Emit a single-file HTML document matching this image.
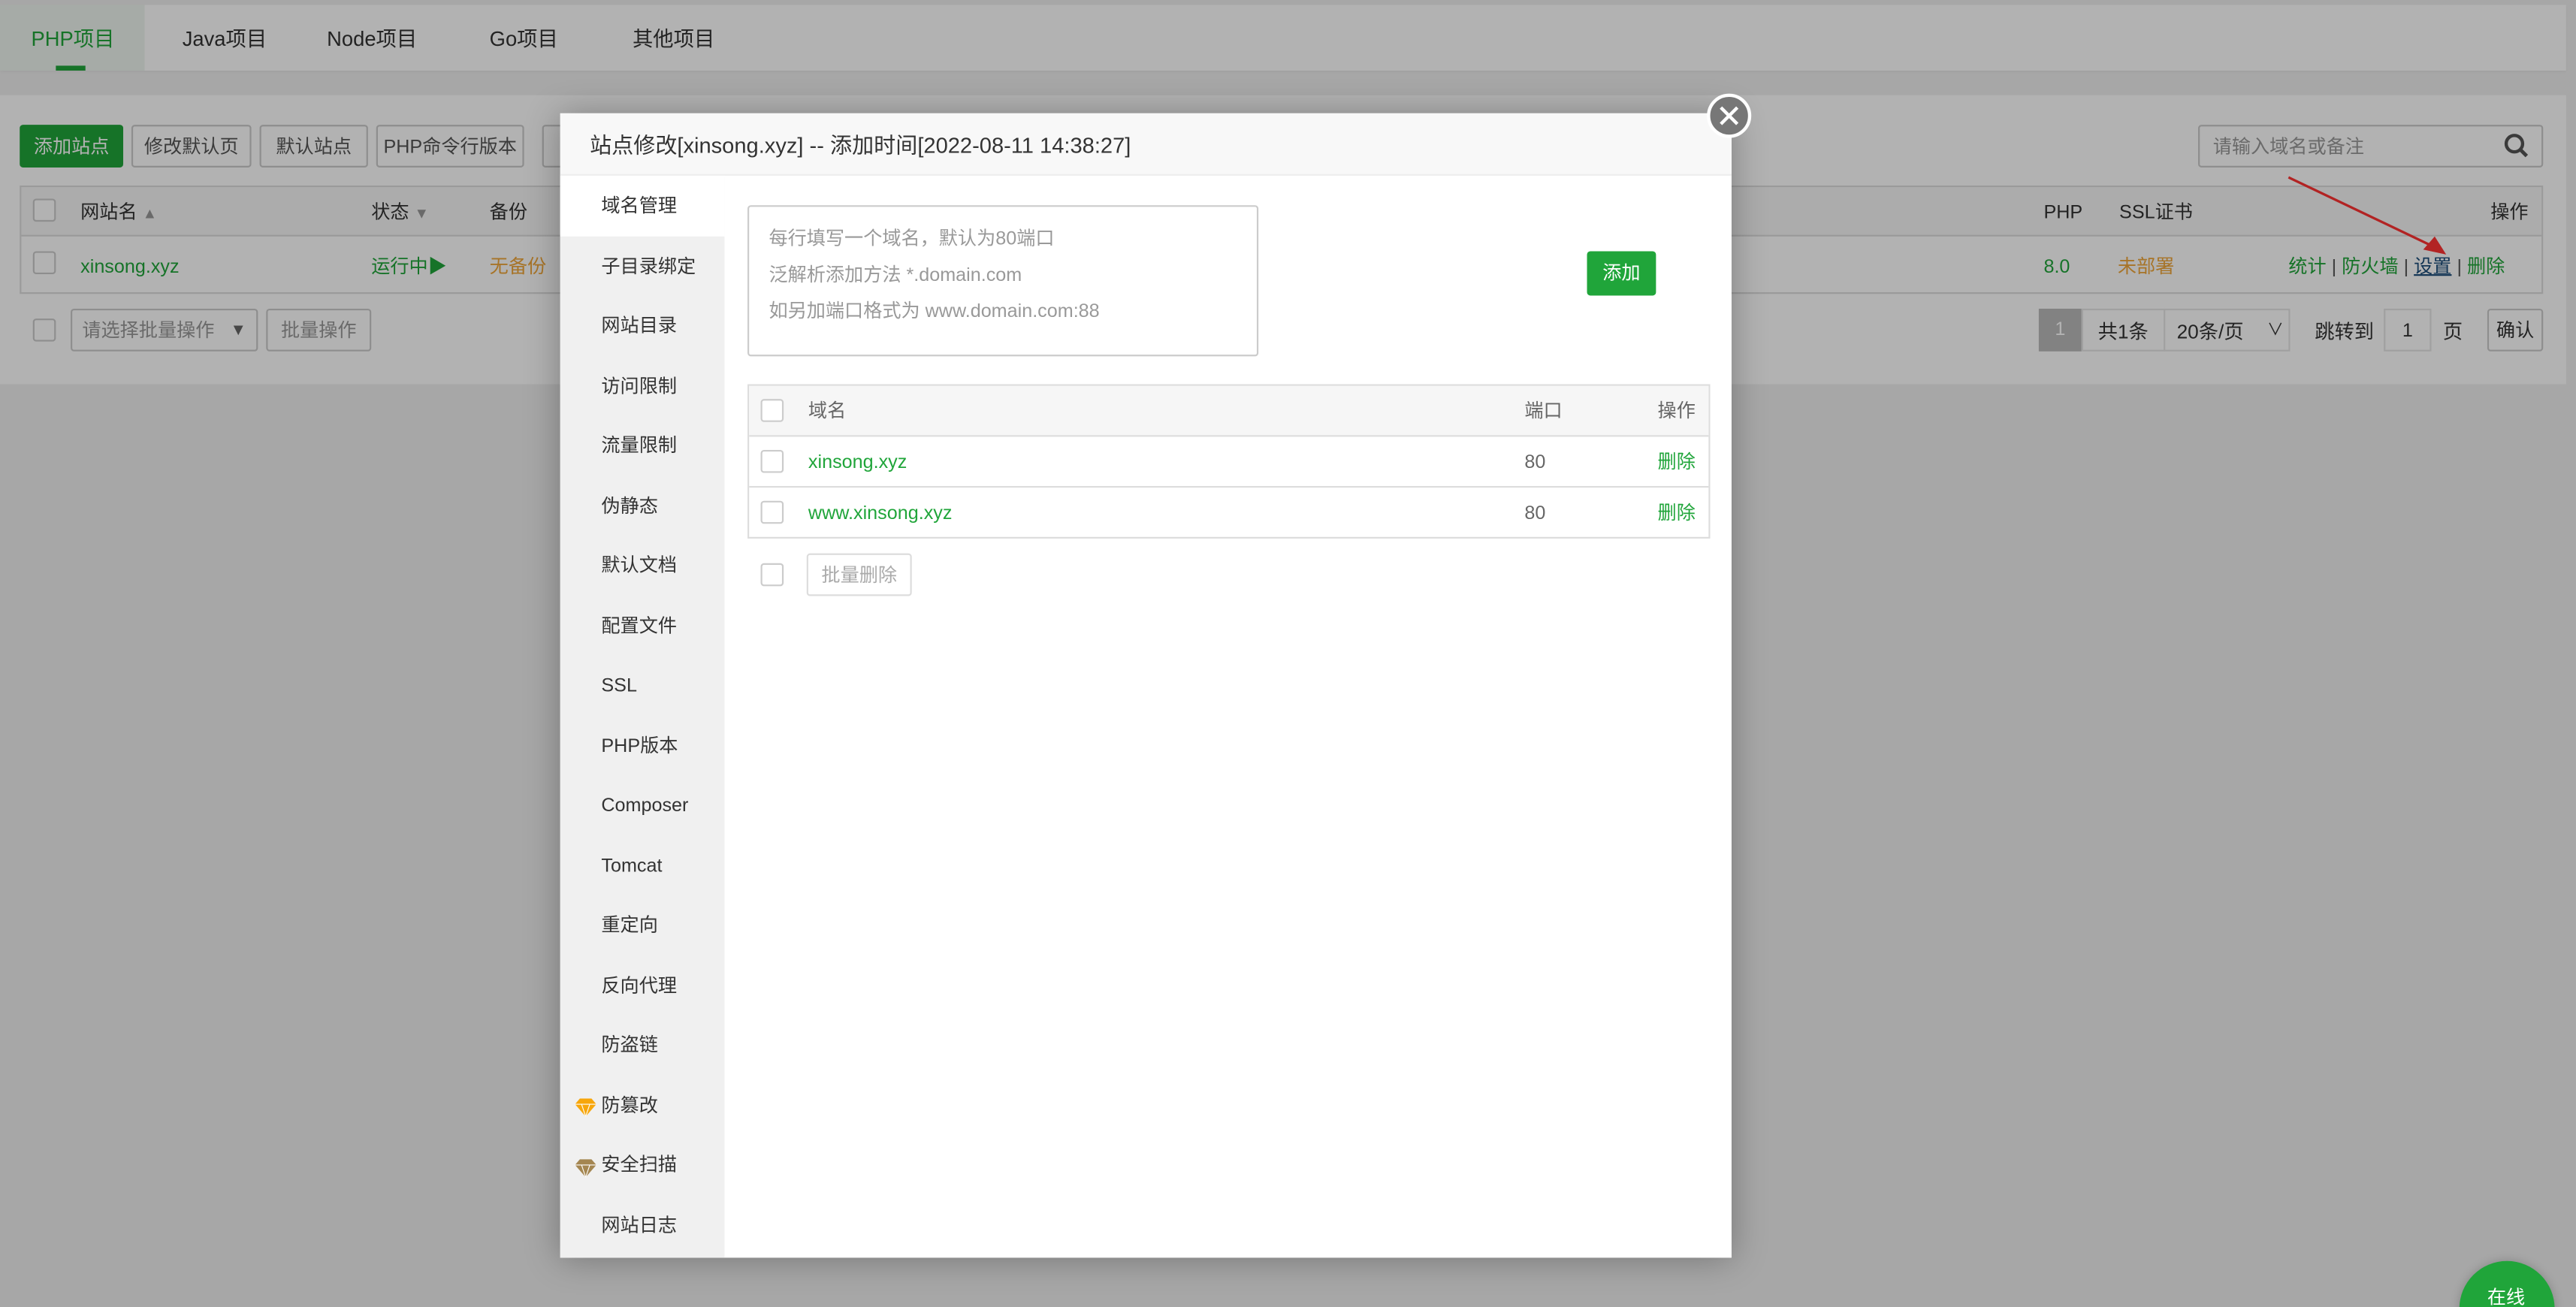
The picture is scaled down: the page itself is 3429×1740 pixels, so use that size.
<!DOCTYPE html>
<html><head><meta charset="utf-8"><style>
*{box-sizing:border-box;margin:0;padding:0}
html,body{width:3429px;height:1740px;overflow:hidden;background:#a8a8a8}
#w{position:absolute;left:0;top:0;width:1568px;height:796px;overflow:hidden;transform:scale(2.18686,2.18593);transform-origin:0 0;font-family:"Liberation Sans","Noto Sans CJK SC",sans-serif;color:#333;font-size:11.5px;background:#f0f0f0}
.a{position:absolute;white-space:nowrap;line-height:20px}
.btn{position:absolute;border:1px solid #ccc;border-radius:2px;background:#fff;color:#555;text-align:center;font-size:11.5px}
.cb{position:absolute;width:14px;height:14px;border:1px solid #ccc;border-radius:2px;background:#fff}
.g{color:#20a53a}.o{color:#f0a63a}
#ov{position:absolute;left:0;top:0;width:1568px;height:796px;background:rgba(0,0,0,.3)}
.si{position:absolute;left:0;width:100px;height:36.5px;line-height:38px;padding-left:25px;font-size:11.5px;color:#333}
</style></head><body><div id="w">
<div class="a" style="left:0;top:3px;width:1562px;height:40px;background:#fff;box-shadow:0 1px 2px rgba(0,0,0,.05)"></div>
<div class="a" style="left:0;top:3px;width:88px;height:40px;background:#eef5ef"></div>
<div class="a" style="left:34px;top:40px;width:18px;height:3px;background:#20a53a"></div>
<div class="a g" style="left:19px;top:14px;font-size:12.5px">PHP项目</div>
<div class="a" style="left:111px;top:14px;font-size:12.5px">Java项目</div>
<div class="a" style="left:199px;top:14px;font-size:12.5px">Node项目</div>
<div class="a" style="left:298px;top:14px;font-size:12.5px">Go项目</div>
<div class="a" style="left:385px;top:14px;font-size:12.5px">其他项目</div>
<div class="a" style="left:0;top:58px;width:1562px;height:176px;background:#fff"></div>
<div class="btn" style="left:12px;top:76px;width:63px;height:26px;line-height:26px;background:#20a53a;border-color:#20a53a;color:#fff">添加站点</div>
<div class="btn" style="left:80px;top:76px;width:73px;height:26px;line-height:26px">修改默认页</div>
<div class="btn" style="left:158px;top:76px;width:66px;height:26px;line-height:26px">默认站点</div>
<div class="btn" style="left:229px;top:76px;width:90px;height:26px;line-height:26px">PHP命令行版本</div>
<div class="btn" style="left:330px;top:76px;width:40px;height:26px"></div>
<div class="btn" style="left:1338px;top:76px;width:210px;height:26px;line-height:26px;text-align:left;padding-left:8px;color:#999">请输入域名或备注</div>
<svg class="a" style="left:1524px;top:81px" width="16" height="16" viewBox="0 0 16 16"><circle cx="6.5" cy="6.5" r="5" fill="none" stroke="#555" stroke-width="2"/><path d="M10 10l4 4" stroke="#555" stroke-width="2.2"/></svg>
<div class="a" style="left:12px;top:113px;width:1536px;height:66px;border:1px solid #ddd"></div>
<div class="a" style="left:13px;top:114px;width:1534px;height:30px;background:#f6f6f6;border-bottom:1px solid #ddd"></div>
<div class="cb" style="left:20px;top:121px"></div>
<div class="a" style="left:49px;top:120px">网站名 <span style="color:#999;font-size:9px">▲</span></div>
<div class="a" style="left:226px;top:120px">状态 <span style="color:#999;font-size:9px">▼</span></div>
<div class="a" style="left:298px;top:120px">备份</div>
<div class="a" style="left:1244px;top:120px">PHP</div>
<div class="a" style="left:1290px;top:120px">SSL证书</div>
<div class="a" style="left:1516px;top:120px">操作</div>
<div class="cb" style="left:20px;top:153px"></div>
<div class="a g" style="left:49px;top:153px">xinsong.xyz</div>
<div class="a g" style="left:226px;top:153px">运行中▶</div>
<div class="a o" style="left:298px;top:153px">无备份</div>
<div class="a g" style="left:1244px;top:153px">8.0</div>
<div class="a o" style="left:1289px;top:153px">未部署</div>
<div class="a g" style="left:1393px;top:153px">统计 <span style="color:#555">|</span> 防火墙 <span style="color:#555">|</span> <span style="color:#1c4d7a;text-decoration:underline">设置</span> <span style="color:#555">|</span> 删除</div>
<div class="cb" style="left:20px;top:194px"></div>
<div class="btn" style="left:43px;top:188px;width:114px;height:26px;line-height:26px;text-align:left;padding-left:6px;color:#999">请选择批量操作<span style="position:absolute;right:6px;color:#666;font-size:10px">▼</span></div>
<div class="btn" style="left:162px;top:188px;width:64px;height:26px;line-height:26px;color:#999">批量操作</div>
<div class="a" style="left:1241px;top:188px;width:26px;height:26px;background:#bbb;color:#fff;text-align:center;line-height:26px">1</div>
<div class="a" style="left:1267px;top:188px;width:127px;height:26px;border:1px solid #e6e6e6"></div>
<div class="a" style="left:1317px;top:188px;width:1px;height:26px;background:#e6e6e6"></div>
<div class="a" style="left:1277px;top:192px;font-size:12px">共1条</div>
<div class="a" style="left:1325px;top:192px;font-size:12px">20条/页</div>
<div class="a" style="left:1380px;top:192px;font-size:10px">∨</div>
<div class="a" style="left:1409px;top:192px;font-size:12px">跳转到</div>
<div class="a" style="left:1451px;top:188px;width:29px;height:26px;border:1px solid #e6e6e6;text-align:center;line-height:26px">1</div>
<div class="a" style="left:1487px;top:192px;font-size:12px">页</div>
<div class="btn" style="left:1514px;top:188px;width:34px;height:26px;line-height:26px;color:#333">确认</div>
<svg class="a" style="left:1385px;top:100px" width="110" height="62"><path d="M8 8L100 52" stroke="#f33" stroke-width="1.5"/><path d="M104 55L90 52L97 44Z" fill="#f33"/></svg>
<div id="ov"></div>
<div class="a" style="left:341px;top:69px;width:713px;height:697px;background:#fff;box-shadow:0 1px 20px rgba(0,0,0,.3)"></div>
<div class="a" style="left:341px;top:69px;width:713px;height:38px;background:#f8f8f8;border-bottom:1px solid #eee"></div>
<div class="a" style="left:359px;top:79px;font-size:13.3px;color:#333">站点修改[xinsong.xyz] -- 添加时间[2022-08-11 14:38:27]</div>
<div class="a" style="left:1039px;top:57px;width:27px;height:27px;border-radius:50%;background:#777;border:2px solid #fff"></div>
<svg class="a" style="left:1039px;top:57px" width="27" height="27"><path d="M8.5 8.5L18.5 18.5M18.5 8.5L8.5 18.5" stroke="#fff" stroke-width="2"/></svg>
<div class="a" style="left:341px;top:107px;width:100px;height:659px;background:#f0f0f0">
<div class="si" style="top:0;background:#fff">域名管理</div>
<div class="si" style="top:36.5px">子目录绑定</div>
<div class="si" style="top:73px">网站目录</div>
<div class="si" style="top:109.5px">访问限制</div>
<div class="si" style="top:146px">流量限制</div>
<div class="si" style="top:182.5px">伪静态</div>
<div class="si" style="top:219px">默认文档</div>
<div class="si" style="top:255.5px">配置文件</div>
<div class="si" style="top:292px">SSL</div>
<div class="si" style="top:328.5px">PHP版本</div>
<div class="si" style="top:365px">Composer</div>
<div class="si" style="top:401.5px">Tomcat</div>
<div class="si" style="top:438px">重定向</div>
<div class="si" style="top:474.5px">反向代理</div>
<div class="si" style="top:511px">防盗链</div>
<div class="si" style="top:547.5px">防篡改</div>
<div class="si" style="top:584px">安全扫描</div>
<div class="si" style="top:620.5px">网站日志</div>
<svg class="a" style="left:9px;top:562px" width="13" height="11" viewBox="0 0 13 11"><path d="M3 0H10L13 3.5L6.5 11L0 3.5Z" fill="#f7a60b"/><path d="M0 3.5H13M4 3.5L6.5 11L9 3.5" stroke="#fff" stroke-width=".5" fill="none"/></svg>
<svg class="a" style="left:9px;top:599px" width="13" height="11" viewBox="0 0 13 11"><path d="M3 0H10L13 3.5L6.5 11L0 3.5Z" fill="#a48651"/><path d="M0 3.5H13M4 3.5L6.5 11L9 3.5" stroke="#fff" stroke-width=".5" fill="none"/></svg>
</div>
<div class="a" style="left:455px;top:125px;width:311px;height:92px;border:1px solid #ccc;border-radius:2px"></div>
<div class="a" style="left:468px;top:135px;color:#999;line-height:22px">每行填写一个域名，默认为80端口<br>泛解析添加方法 *.domain.com<br>如另加端口格式为 www.domain.com:88</div>
<div class="btn" style="left:966px;top:153px;width:42px;height:27px;line-height:27px;background:#20a53a;border-color:#20a53a;color:#fff">添加</div>
<div class="a" style="left:455px;top:234px;width:586px;height:94px;border:1px solid #ddd"></div>
<div class="a" style="left:456px;top:235px;width:584px;height:31px;background:#f6f6f6;border-bottom:1px solid #ddd"></div>
<div class="a" style="left:456px;top:296px;width:584px;height:1px;background:#ddd"></div>
<div class="cb" style="left:463px;top:243px"></div>
<div class="a" style="left:492px;top:241px;color:#666">域名</div>
<div class="a" style="left:928px;top:241px;color:#666">端口</div>
<div class="a" style="left:1009px;top:241px;color:#666">操作</div>
<div class="cb" style="left:463px;top:274px"></div>
<div class="a g" style="left:492px;top:272px">xinsong.xyz</div>
<div class="a" style="left:928px;top:272px;color:#666">80</div>
<div class="a g" style="left:1009px;top:272px">删除</div>
<div class="cb" style="left:463px;top:305px"></div>
<div class="a g" style="left:492px;top:303px">www.xinsong.xyz</div>
<div class="a" style="left:928px;top:303px;color:#666">80</div>
<div class="a g" style="left:1009px;top:303px">删除</div>
<div class="cb" style="left:463px;top:343px"></div>
<div class="btn" style="left:491px;top:337px;width:64px;height:26px;line-height:26px;color:#aaa;border-color:#ddd">批量删除</div>
<div class="a" style="left:1497px;top:768px;width:58px;height:58px;border-radius:50%;background:#20a53a;box-shadow:0 0 6px rgba(0,0,0,.2)"></div>
<div class="a" style="left:1514px;top:781px;color:#fff;font-size:11.5px">在线</div>
</div></body></html>
